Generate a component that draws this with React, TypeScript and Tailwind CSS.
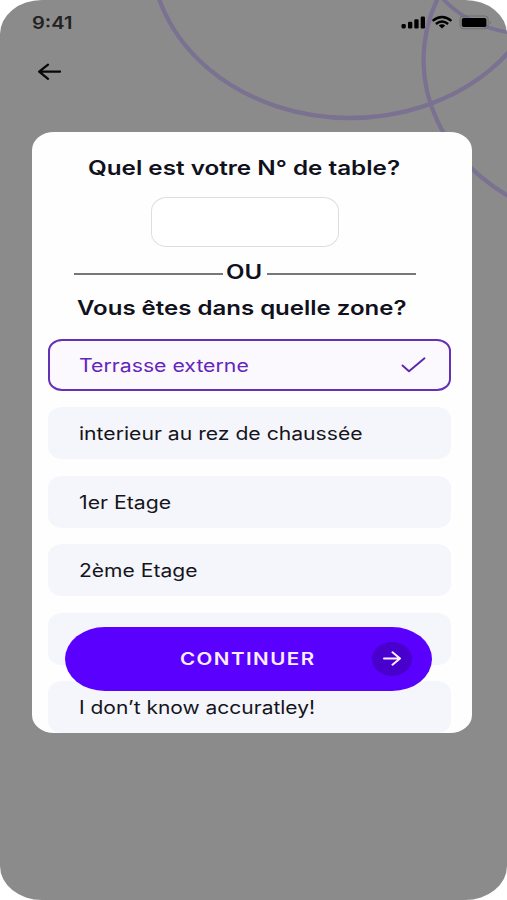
const zones = [
  { name: "Terrasse externe", selected: true, text: "mt-[2px] scale-x-[1.18]" },
  { name: "interieur au rez de chaussée", text: "mt-[2px] scale-x-[1.175]" },
  { name: "1er Etage", text: "mt-[2px] scale-x-[1.18]" },
  { name: "2ème Etage", text: "mt-[2px] scale-x-[1.17]" },
  { name: "3ème Etage", text: "mt-[5px] scale-x-[1.17]" },
  { name: "I don’t know accuratley!", text: "mt-[2px] scale-x-[1.165]" },
]

function Rings() {
  return (
    <svg className="absolute inset-0" width="507" height="240" fill="none" stroke="#7b7292" strokeWidth="4.3">
      <ellipse cx="350" cy="-48" rx="199" ry="166" />
      <ellipse cx="622" cy="60" rx="198.5" ry="166" />
      <ellipse cx="529" cy="-55" rx="108" ry="89" strokeWidth="3.8" />
    </svg>
  )
}

function StatusBar() {
  return (
    <div className="flex h-[46px] items-center justify-between pl-8 pr-[15px]">
      <span className="origin-left scale-x-[1.18] text-[17px] font-semibold leading-none text-[#222]">9:41</span>
      <svg width="92" height="18" viewBox="400 14 92 18">
        <rect x="401.5" y="24" width="4.3" height="4.5" rx="1.4" />
        <rect x="408" y="21.8" width="4.3" height="6.7" rx="1.2" />
        <rect x="414.3" y="19.2" width="4.3" height="9.3" rx="1.2" />
        <rect x="420.7" y="16.5" width="4.3" height="12" rx="1.2" />
        <g fill="none" stroke="#000" strokeWidth="2.3">
          <path d="M432.6 20.8Q442 13.2 451.4 20.8" />
          <path d="M435.9 24Q442 18.9 448.1 24" />
        </g>
        <path d="M438.8 25.6Q442 23 445.2 25.6L442 28.4z" />
        <rect x="460" y="16" width="28.2" height="12.8" rx="3.2" fill="none" stroke="#6e6e6e" />
        <rect x="461.8" y="18" width="24.6" height="9" rx="1.8" />
        <path d="M489.8 20.6Q491.6 22.4 489.8 24.6z" fill="#666" />
      </svg>
    </div>
  )
}

export default function App() {
  return (
    <div className="h-[900px] w-[507px] bg-white font-['Inter',sans-serif]">
      <div className="relative h-full overflow-hidden rounded-[42px/34px] bg-[#8b8b8b]">
        <Rings />
        <div className="relative">
          <StatusBar />
          <div className="h-[86px] pl-[37px] pt-[17px]">
            <svg width="26" height="18" viewBox="37 63 26 18" fill="none" stroke="#080808" strokeWidth="2.3" strokeLinecap="round" strokeLinejoin="round">
              <path d="M60 71.7H39.2M48 64.6L39.2 71.7L48 78.8" />
            </svg>
          </div>

          <main className="relative ml-8 flex h-[601px] w-[440px] flex-col overflow-hidden rounded-[22px/18px] bg-[#fefefe] text-[#11111d]">
            <h2 className="ml-14 mt-[24px] w-max origin-left scale-x-[1.212] whitespace-nowrap text-[20px] font-semibold leading-6">
              Quel est votre N° de table?
            </h2>
            <input
              aria-label="N° de table"
              className="ml-[118.5px] mt-[17px] h-[50px] w-[188px] shrink-0 rounded-[16px/14px] border-[1.5px] border-[#dcdfe1] bg-white px-4 text-center outline-none"
            />
            <div className="ml-[41.5px] mt-[13px] flex h-6 w-[342px] items-center justify-between">
              <div className="mt-[3px] h-[2px] w-[149px] bg-[#77777b]" />
              <span className="scale-x-[1.2] text-[20px] font-semibold leading-6">OU</span>
              <div className="mt-[3px] h-[2px] w-[149px] bg-[#77777b]" />
            </div>
            <h2 className="ml-[45px] mt-[12px] w-max origin-left scale-x-[1.2] whitespace-nowrap text-[20px] font-semibold leading-6">
              Vous êtes dans quelle zone?
            </h2>

            <ul className="ml-4 mt-[18.5px] flex w-[403px] flex-col gap-[16.5px]">
              {zones.map((zone) => (
                <li
                  key={zone.name}
                  className={
                    zone.selected
                      ? "flex h-[52px] shrink-0 items-center justify-between rounded-[14px/12px] border-2 border-[#6430b8] bg-[#fbf8fe] pl-[28.5px] pr-[23px] text-[#6425bd]"
                      : "flex h-[52px] shrink-0 items-center rounded-[14px/12px] bg-[#f5f6fb] pl-[30.5px] text-[#15151b]"
                  }
                >
                  <span className={`${zone.text} origin-left whitespace-nowrap text-[18px] font-[430] leading-6`}>{zone.name}</span>
                  {zone.selected && (
                    <svg width="26" height="18" viewBox="400 356 26 18" fill="none" stroke="#5a27ad" strokeWidth="1.9" strokeLinecap="round" strokeLinejoin="round">
                      <path d="M402.5 365.5L409 371.2L424.5 358.3" />
                    </svg>
                  )}
                </li>
              ))}
            </ul>

            <button className="absolute left-[33px] top-[495px] flex h-16 w-[367px] items-center justify-between rounded-[40px/32px] bg-[#5a00fe] pl-[115px] pr-[20px] text-[#fbeeff]">
              <span className="mt-px origin-left scale-x-[1.21] text-[17px] font-semibold leading-none tracking-[1.2px]">CONTINUER</span>
              <span className="flex h-[34px] w-10 items-center justify-center rounded-[50%] bg-[#4900cc]">
                <svg width="20" height="16" viewBox="0 0 20 16" fill="none" stroke="currentColor" strokeWidth="2" strokeLinecap="round" strokeLinejoin="round">
                  <path d="M2 7.5H18M10.5 1.3L18 7.5L10.5 13.7" />
                </svg>
              </span>
            </button>
          </main>
        </div>
      </div>
    </div>
  )
}
